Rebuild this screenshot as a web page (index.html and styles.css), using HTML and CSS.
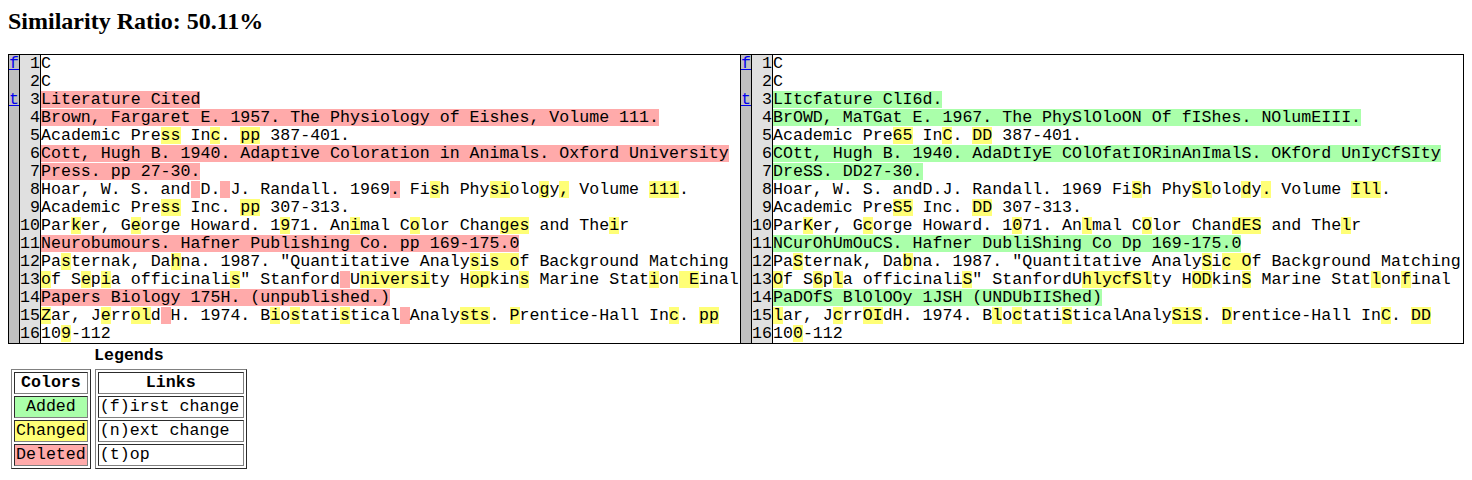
FILE: index.html
```html
<!DOCTYPE html>
<html>
<head>
<meta charset="utf-8">
<title>Diff</title>
<link rel="stylesheet" href="styles.css">
</head>
<body>
<h2 class="title">Similarity Ratio: 50.11%</h2>
<div class="diff difftable">
  <div class="row"><div class="nx"><a href="#top">f</a></div><div class="ln">1</div><div class="tx">C</div><div class="nx"><a href="#top">f</a></div><div class="ln">1</div><div class="tx">C</div></div>
  <div class="row"><div class="nx"></div><div class="ln">2</div><div class="tx">C</div><div class="nx"></div><div class="ln">2</div><div class="tx">C</div></div>
  <div class="row"><div class="nx"><a href="#top">t</a></div><div class="ln">3</div><div class="tx"><span class="sub">Literature Cited</span></div><div class="nx"><a href="#top">t</a></div><div class="ln">3</div><div class="tx"><span class="add">LItcfature ClI6d.</span></div></div>
  <div class="row"><div class="nx"></div><div class="ln">4</div><div class="tx"><span class="sub">Brown, Fargaret E. 1957. The Physiology of Eishes, Volume 111.</span></div><div class="nx"></div><div class="ln">4</div><div class="tx"><span class="add">BrOWD, MaTGat E. 1967. The PhySlOloON Of fIShes. NOlumEIII.</span></div></div>
  <div class="row"><div class="nx"></div><div class="ln">5</div><div class="tx">Academic Pre<span class="chg">ss</span> In<span class="chg">c</span>. <span class="chg">pp</span> 387-401.</div><div class="nx"></div><div class="ln">5</div><div class="tx">Academic Pre<span class="chg">65</span> In<span class="chg">C</span>. <span class="chg">DD</span> 387-401.</div></div>
  <div class="row"><div class="nx"></div><div class="ln">6</div><div class="tx"><span class="sub">Cott, Hugh B. 1940. Adaptive Coloration in Animals. Oxford University</span></div><div class="nx"></div><div class="ln">6</div><div class="tx"><span class="add">COtt, Hugh B. 1940. AdaDtIyE COlOfatIORinAnImalS. OKfOrd UnIyCfSIty</span></div></div>
  <div class="row"><div class="nx"></div><div class="ln">7</div><div class="tx"><span class="sub">Press. pp 27-30.</span></div><div class="nx"></div><div class="ln">7</div><div class="tx"><span class="add">DreSS. DD27-30.</span></div></div>
  <div class="row"><div class="nx"></div><div class="ln">8</div><div class="tx">Hoar, W. S. and<span class="sub"> </span>D.<span class="sub"> </span>J. Randall. 1969<span class="sub">.</span> Fi<span class="chg">s</span>h Phy<span class="chg">si</span>olo<span class="chg">g</span>y<span class="chg">,</span> Volume <span class="chg">111</span>.</div><div class="nx"></div><div class="ln">8</div><div class="tx">Hoar, W. S. andD.J. Randall. 1969 Fi<span class="chg">S</span>h Phy<span class="chg">Sl</span>olo<span class="chg">d</span>y<span class="chg">.</span> Volume <span class="chg">Ill</span>.</div></div>
  <div class="row"><div class="nx"></div><div class="ln">9</div><div class="tx">Academic Pre<span class="chg">ss</span> Inc. <span class="chg">pp</span> 307-313.</div><div class="nx"></div><div class="ln">9</div><div class="tx">Academic Pre<span class="chg">S5</span> Inc. <span class="chg">DD</span> 307-313.</div></div>
  <div class="row"><div class="nx"></div><div class="ln">10</div><div class="tx">Par<span class="chg">k</span>er, G<span class="chg">e</span>orge Howard. 1<span class="chg">9</span>71. An<span class="chg">i</span>mal C<span class="chg">o</span>lor Chan<span class="chg">ges</span> and The<span class="chg">i</span>r</div><div class="nx"></div><div class="ln">10</div><div class="tx">Par<span class="chg">K</span>er, G<span class="chg">c</span>orge Howard. 1<span class="chg">0</span>71. An<span class="chg">l</span>mal C<span class="chg">O</span>lor Chan<span class="chg">dES</span> and The<span class="chg">l</span>r</div></div>
  <div class="row"><div class="nx"></div><div class="ln">11</div><div class="tx"><span class="sub">Neurobumours. Hafner Publishing Co. pp 169-175.0</span></div><div class="nx"></div><div class="ln">11</div><div class="tx"><span class="add">NCurOhUmOuCS. Hafner DubliShing Co Dp 169-175.0</span></div></div>
  <div class="row"><div class="nx"></div><div class="ln">12</div><div class="tx">Pa<span class="chg">s</span>ternak, Da<span class="chg">h</span>na. 1987. "Quantitative Analy<span class="chg">s</span>i<span class="chg">s o</span>f Background Matching</div><div class="nx"></div><div class="ln">12</div><div class="tx">Pa<span class="chg">S</span>ternak, Da<span class="chg">b</span>na. 1987. "Quantitative Analy<span class="chg">S</span>i<span class="chg">c O</span>f Background Matching</div></div>
  <div class="row"><div class="nx"></div><div class="ln">13</div><div class="tx"><span class="chg">o</span>f S<span class="chg">e</span>p<span class="chg">i</span>a officinali<span class="chg">s</span>" Stanford<span class="sub"> </span>U<span class="chg">niversi</span>ty H<span class="chg">op</span>kin<span class="chg">s</span> Marine Stat<span class="chg">i</span>on<span class="chg"> E</span>inal</div><div class="nx"></div><div class="ln">13</div><div class="tx"><span class="chg">O</span>f S<span class="chg">6</span>p<span class="chg">l</span>a officinali<span class="chg">S</span>" StanfordU<span class="chg">hlycfSl</span>ty H<span class="chg">OD</span>kin<span class="chg">S</span> Marine Stat<span class="chg">l</span>on<span class="chg">f</span>inal</div></div>
  <div class="row"><div class="nx"></div><div class="ln">14</div><div class="tx"><span class="sub">Papers Biology 175H. (unpublished.)</span></div><div class="nx"></div><div class="ln">14</div><div class="tx"><span class="add">PaDOfS BlOlOOy 1JSH (UNDUbIIShed)</span></div></div>
  <div class="row"><div class="nx"></div><div class="ln">15</div><div class="tx"><span class="chg">Z</span>ar, J<span class="chg">e</span>rr<span class="chg">ol</span>d<span class="sub"> </span>H. 1974. B<span class="chg">i</span>o<span class="chg">s</span>tati<span class="chg">s</span>tical<span class="sub"> </span>Analy<span class="chg">sts</span>. <span class="chg">P</span>rentice-Hall In<span class="chg">c</span>. <span class="chg">pp</span></div><div class="nx"></div><div class="ln">15</div><div class="tx"><span class="chg">l</span>ar, J<span class="chg">c</span>rr<span class="chg">OI</span>dH. 1974. B<span class="chg">l</span>o<span class="chg">c</span>tati<span class="chg">S</span>ticalAnaly<span class="chg">SiS</span>. <span class="chg">D</span>rentice-Hall In<span class="chg">C</span>. <span class="chg">DD</span></div></div>
  <div class="row"><div class="nx"></div><div class="ln">16</div><div class="tx">10<span class="chg">9</span>-112</div><div class="nx"></div><div class="ln">16</div><div class="tx">10<span class="chg">0</span>-112</div></div>
</div>
<div class="diff legend">
  <div class="legend-title">Legends</div>
  <div class="legend-boxes">
    <div class="lbox">
      <div class="lcell lhead">Colors</div>
      <div class="lcell add">&nbsp;Added&nbsp;</div>
      <div class="lcell chg">Changed</div>
      <div class="lcell sub">Deleted</div>
    </div>
    <div class="lbox links">
      <div class="lcell lhead">Links</div>
      <div class="lcell">(f)irst change</div>
      <div class="lcell">(n)ext change</div>
      <div class="lcell">(t)op</div>
    </div>
  </div>
</div>
</body>
</html>
```
FILE: styles.css
```css
body {
  margin: 8px;
  font-family: "Liberation Serif", serif;
  color: #000;
  background: #fff;
}
.title {
  margin: 0 0 19px;
  font-size: 24px;
  line-height: 27px;
  font-weight: bold;
}
.diff {
  font-family: "Liberation Mono", "Courier New", monospace;
  font-size: 16.63px;
  line-height: 18px;
}
.difftable {
  border: 1px solid #000;
  background: #000;
  display: flex;
  flex-direction: column;
}
.row {
  display: grid;
  grid-template-columns: 10px 20px 1fr 10px 20px 690px;
  column-gap: 1px;
  height: 18px;
}
.nx {
  background: #c0c0c0;
}
.nx a {
  color: #0000ee;
  text-decoration: underline;
}
.ln {
  background: #e0e0e0;
  text-align: right;
}
.tx {
  background: #fff;
  white-space: pre;
  overflow: hidden;
}
.tx span {
  display: inline-block;
  height: 17px;
  vertical-align: top;
}
.sub { background: #ffaaaa; }
.add { background: #aaffaa; }
.chg { background: #ffff77; }

.legend {
  display: inline-flex;
  flex-direction: column;
  padding: 2px;
  gap: 2px;
}
.legend-title {
  padding: 1px;
  text-align: center;
  font-weight: bold;
}
.legend-boxes {
  display: flex;
  align-items: flex-start;
  gap: 4px;
  padding: 1px;
}
.lbox {
  display: flex;
  flex-direction: column;
  gap: 2px;
  padding: 2px;
  border: 1px outset grey;
}
.lbox.links {
  min-width: 152px;
  box-sizing: border-box;
}
.lcell {
  border: 1px inset grey;
  padding: 1px;
  white-space: pre;
}
.lhead {
  font-weight: bold;
  text-align: center;
}
.lcell.add {
  text-align: center;
}
```
